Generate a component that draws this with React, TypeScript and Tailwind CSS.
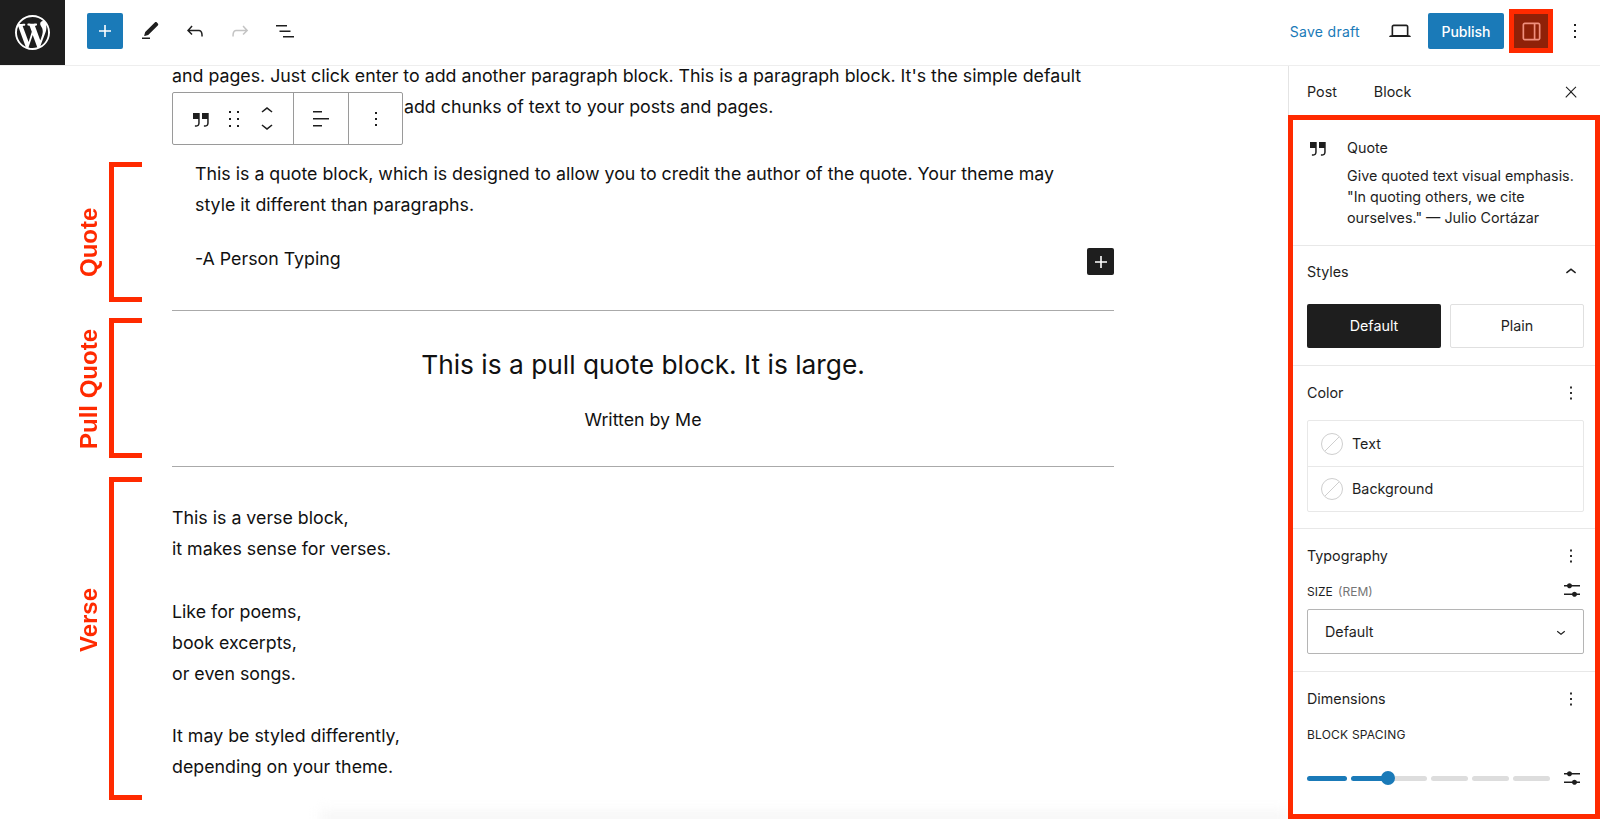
import type { ReactNode } from "react";

const P = {
  plus: "M18 11.2h-5.2V6h-1.6v5.2H6v1.6h5.2V18h1.6v-5.2H18z",
  pencil: "M4 20h8v-1.5H4V20zM18.9 3.5c-.6-.6-1.5-.6-2.1 0L7.2 13.1l-1 3.5c-.1.3.2.6.5.5l3.5-1 9.6-9.6c.6-.6.6-1.5 0-2.1l-.9-.9z",
  undo: "M18.3 11.7c-.6-.6-1.4-.9-2.3-.9H6.7l2.9-3.3-1.1-1-4.5 5L8.5 16l1-1-2.7-2.7H16c.5 0 .9.2 1.3.5 1 1 1 3.4 1 4.5v.3h1.5v-.2c0-1.5 0-4.3-1.5-5.7z",
  redo: "M15.6 6.5l-1.1 1 2.9 3.3H8c-.9 0-1.7.3-2.3.9-1.4 1.5-1.4 4.2-1.4 5.6v.2h1.5v-.3c0-1.1 0-3.5 1-4.5.3-.3.7-.5 1.3-.5h9.2L14.5 15l1.1 1.1 4.6-4.6-4.6-5z",
  list: "M3 6h11v1.5H3V6zm3.5 5.5h11V13h-11v-1.5zM21 17H10v1.5h11V17z",
  quote: "M13 6v6h5.2v4c0 .8-.2 1.4-.5 1.7-.6.6-1.6.6-2.5.5h-.3v1.5h.5c1 0 2.3-.1 3.3-1 .6-.6 1-1.6 1-2.8V6H13zm-9 6h5.2v4c0 .8-.2 1.4-.5 1.7-.6.6-1.6.6-2.5.5h-.3v1.5h.5c1 0 2.3-.1 3.3-1 .6-.6 1-1.6 1-2.8V6H4v6z",
  drag: "M7 4h2v2H7zM15 4h2v2h-2zM7 11h2v2H7zM15 11h2v2h-2zM7 18h2v2H7zM15 18h2v2h-2z",
  more: "M13 19h-2v-2h2v2zm0-6h-2v-2h2v2zm0-6h-2V5h2v2z",
  align: "M13 5.5H4V4h9v1.5Zm7 7H4V11h16v1.5Zm-7 7H4V18h9v1.5Z",
  laptop: "M20.5 16h-.7V8c0-1.1-.9-2-2-2H6.2c-1.1 0-2 .9-2 2v8h-.7c-.8 0-1.5.7-1.5 1.5h20c0-.8-.7-1.5-1.5-1.5zM5.7 8c0-.3.2-.5.5-.5h11.6c.3 0 .5.2.5.5v7.6H5.7V8z",
  sidebar: "M18 4H6c-1.1 0-2 .9-2 2v12c0 1.1.9 2 2 2h12c1.1 0 2-.9 2-2V6c0-1.1-.9-2-2-2zm-4 14.5H6c-.3 0-.5-.2-.5-.5V6c0-.3.2-.5.5-.5h8v13zm4.5-.5c0 .3-.2.5-.5.5h-2.5v-13H18c.3 0 .5.2.5.5v12z",
  close: "M13 11.8l6.1-6.3-1-1-6.1 6.2-6.1-6.2-1 1 6.1 6.3-6.5 6.7 1 1 6.5-6.6 6.5 6.6 1-1z",
  up: "M6.5 12.4L12 8l5.5 4.4-.9 1.2L12 10l-4.5 3.6-1-1.2z",
  down: "M17.5 11.6L12 16l-5.5-4.4.9-1.2L12 14l4.5-3.6 1 1.2z",
  sliders: "M14.5 13.8c-1.1 0-2.1.7-2.4 1.8H4V17h8.1c.3 1 1.3 1.8 2.4 1.8s2.1-.7 2.4-1.8H20v-1.5h-3.1c-.3-1-1.3-1.7-2.4-1.7zM11.9 7c-.3-1-1.3-1.8-2.4-1.8S7.4 6 7.1 7H4v1.5h3.1c.3 1 1.3 1.8 2.4 1.8s2.1-.7 2.4-1.8H20V7h-8.1z",
};

const WP_LOGO =
  "M20 10c0-5.51-4.49-10-10-10C4.48 0 0 4.49 0 10c0 5.52 4.48 10 10 10 5.51 0 10-4.48 10-10zM7.78 15.37L4.37 6.22c.55-.02 1.17-.08 1.17-.08.5-.06.44-1.13-.06-1.11 0 0-1.45.11-2.37.11-.18 0-.37 0-.58-.01C4.12 2.69 6.87 1.11 10 1.11c2.33 0 4.45.87 6.05 2.34-.68-.11-1.65.39-1.65 1.58 0 .74.45 1.36.9 2.1.35.61.55 1.36.55 2.46 0 1.49-1.4 5-1.4 5l-3.03-8.37c.54-.02.82-.17.82-.17.5-.05.44-1.25-.06-1.22 0 0-1.44.12-2.38.12-.87 0-2.33-.12-2.33-.12-.5-.03-.56 1.2-.06 1.22l.92.08 1.26 3.41zM17.41 10c.24-.64.74-1.87.43-4.25.7 1.29 1.05 2.71 1.05 4.25 0 3.29-1.73 6.24-4.4 7.78.97-2.59 1.94-5.2 2.92-7.78zM6.1 18.09C3.12 16.65 1.11 13.53 1.11 10c0-1.3.23-2.48.72-3.59C3.25 10.3 4.67 14.2 6.1 18.09zm4.03-6.63l2.58 6.98c-.86.29-1.76.45-2.71.45-.79 0-1.57-.11-2.29-.33.81-2.38 1.62-4.74 2.42-7.1z";

function Icon({ d, className = "w-6 h-6 fill-[#1e1e1e]" }: { d: string; className?: string }) {
  return (
    <svg viewBox="0 0 24 24" className={className}>
      <path d={d} />
    </svg>
  );
}

function Bracket({ top, height }: { top: string; height: string }) {
  return <div className={`absolute left-[109px] w-[33px] border-[5px] border-r-0 border-[#ff2a00] ${top} ${height}`} />;
}

function VLabel({ children, className }: { children: ReactNode; className: string }) {
  return (
    <div
      className={`absolute left-[75px] h-[160px] w-[28px] flex items-center justify-center [writing-mode:vertical-rl] rotate-180 text-[#ff2a00] font-bold text-[24px] leading-none font-['Liberation_Sans',sans-serif] ${className}`}
    >
      {children}
    </div>
  );
}

function PanelHead({ title, icon = P.more }: { title: string; icon?: string }) {
  return (
    <div className="flex items-center justify-between h-6 pr-[2px]">
      <span className="text-[14.3px] text-[#1e1e1e]">{title}</span>
      <Icon d={icon} className="w-[22px] h-[22px] fill-[#1e1e1e]" />
    </div>
  );
}

function ColorRow({ label, border }: { label: string; border?: boolean }) {
  return (
    <div className={`flex items-center h-[45px] pl-[12px] gap-2 text-[14.3px] text-[#1e1e1e] ${border ? "border-t border-[#e8e8e8]" : ""}`}>
      <svg viewBox="0 0 24 24" className="w-6 h-6">
        <circle cx="12" cy="12" r="10.5" fill="none" stroke="#cfcfcf" />
        <path d="M5 19 L19 5" stroke="#cfcfcf" />
      </svg>
      <span>{label}</span>
    </div>
  );
}

export default function App() {
  const segs = ["w-[40px] bg-[#1a7ab8]", "w-[36px] bg-[#1a7ab8]", "w-[36px] bg-[#dddddd]", "w-[37px] bg-[#dddddd]", "w-[37px] bg-[#dddddd]", "w-[37px] bg-[#dddddd]"];

  return (
    <div className="h-[819px] w-[1600px] overflow-hidden relative flex flex-col bg-white font-['Inter',sans-serif] text-[#1e1e1e]">
      {/* Top bar */}
      <header className="h-[66px] flex-shrink-0 flex items-center border-b border-[#eeeeee]">
        <div className="w-[65px] h-[65px] bg-[#1e1e1e] flex items-center justify-center">
          <svg viewBox="0 0 20 20" className="w-[35px] h-[35px] fill-white">
            <path d={WP_LOGO} />
          </svg>
        </div>
        <button className="ml-[22px] mb-[3px] w-9 h-9 rounded-[2px] bg-[#1a7ab8] flex items-center justify-center">
          <Icon d={P.plus} className="w-6 h-6 fill-white" />
        </button>
        <div className="ml-[15px] mb-[3px] flex items-center gap-[21px]">
          <Icon d={P.pencil} />
          <Icon d={P.undo} />
          <Icon d={P.redo} className="w-6 h-6 fill-[#c4c4c4]" />
          <Icon d={P.list} />
        </div>
        <div className="ml-auto mb-[3px] flex items-center">
          <span className="text-[14px] text-[#1a7ab8] tracking-[0.3px]">Save draft</span>
          <Icon d={P.laptop} className="ml-[27px] w-[26px] h-[26px] fill-[#1e1e1e]" />
          <button className="ml-[15px] w-[76px] h-9 rounded-[2px] bg-[#1a7ab8] text-white text-[14px] font-medium">Publish</button>
          <div className="ml-[5px] w-[44px] h-[44px] border-[5px] border-[#ff2a00] bg-[#8f2108] flex items-center justify-center">
            <Icon d={P.sidebar} className="w-[27px] h-[27px] flex-shrink-0 fill-[#f08f7d]" />
          </div>
          <Icon d={P.more} className="ml-[10px] mr-[13px] w-6 h-6 fill-[#1e1e1e]" />
        </div>
      </header>

      <div className="flex-1 flex min-h-0">
        {/* Editor canvas */}
        <main className="flex-1 relative overflow-hidden pl-[172px]">
          <div className="w-[942px] -mt-[6px] text-[17.8px] leading-[31px] text-[#111111]">
            <div className="whitespace-nowrap">and pages. Just click enter to add another paragraph block. This is a paragraph block. It's the simple default</div>
            <div className="pl-[232px] whitespace-nowrap">add chunks of text to your posts and pages.</div>

            <div className="pl-[23px] pt-[36px] pr-[40px]">
              <p>This is a quote block, which is designed to allow you to credit the author of the quote. Your theme may style it different than paragraphs.</p>
              <div className="flex items-center justify-between mt-[23px] -mr-[40px]">
                <span>-A Person Typing</span>
                <span className="w-[27px] h-[27px] mt-[3px] -mb-[3px] rounded-[2px] bg-[#1e1e1e] flex items-center justify-center">
                  <Icon d={P.plus} className="w-6 h-6 fill-white" />
                </span>
              </div>
            </div>

            <div className="mt-[36px] border-t border-[#aaaaaa] h-[156px] flex flex-col items-center pt-[37px]">
              <div className="text-[26.3px] leading-[34px]">This is a pull quote block. It is large.</div>
              <div className="mt-[25px] leading-[26px]">Written by Me</div>
            </div>

            <div className="border-t border-[#aaaaaa] pt-[35px]">
              <p>This is a verse block,</p>
              <p>it makes sense for verses.</p>
              <p className="mt-[32px]">Like for poems,</p>
              <p>book excerpts,</p>
              <p>or even songs.</p>
              <p className="mt-[31px]">It may be styled differently,</p>
              <p>depending on your theme.</p>
            </div>
          </div>

          {/* Block toolbar */}
          <div className="absolute left-[172px] top-[26px] w-[231px] h-[53px] flex bg-white border border-[#9a9a9a] rounded-[2px]">
            <div className="w-[121px] flex items-center pl-[16px] border-r border-[#9a9a9a]">
              <Icon d={P.quote} />
              <Icon d={P.drag} className="ml-[9px] w-6 h-6 fill-[#1e1e1e]" />
              <div className="ml-[9px] flex flex-col">
                <Icon d={P.up} className="w-6 h-6 -mb-[9px] fill-[#1e1e1e]" />
                <Icon d={P.down} className="w-6 h-6 fill-[#1e1e1e]" />
              </div>
            </div>
            <div className="w-[55px] flex items-center justify-center border-r border-[#9a9a9a]">
              <Icon d={P.align} />
            </div>
            <div className="flex-1 flex items-center justify-center">
              <Icon d={P.more} />
            </div>
          </div>

          {/* Annotations */}
          <VLabel className="top-[96px]">Quote</VLabel>
          <Bracket top="top-[96px]" height="h-[140px]" />
          <VLabel className="top-[243px]">Pull Quote</VLabel>
          <Bracket top="top-[252px]" height="h-[140px]" />
          <VLabel className="top-[474px]">Verse</VLabel>
          <Bracket top="top-[411px]" height="h-[323px]" />

          {/* Bottom fade of the canvas */}
          <div className="absolute left-[320px] right-0 -bottom-[6px] h-[14px] bg-[#f6f6f6] blur-[6px]" />
        </main>

        {/* Settings sidebar */}
        <aside className="w-[312px] flex-shrink-0 flex flex-col border-l border-[#e4e4e4]">
          <div className="h-[49px] flex-shrink-0 flex items-center pl-[18px] pr-[20px] pt-[3px] text-[14.3px]">
            <span>Post</span>
            <span className="ml-[37px]">Block</span>
            <Icon d={P.close} className="ml-auto w-[18px] h-[18px] fill-[#1e1e1e]" />
          </div>
          <div className="flex-1 border-[5px] border-[#ff2a00] -ml-px min-h-0">
            <section className="h-[126px] flex pl-[14px] pr-[11px] pt-[16px] border-b border-[#e8e8e8]">
              <Icon d={P.quote} className="-ml-[1px] w-6 h-6 flex-shrink-0 fill-[#1e1e1e]" />
              <div className="ml-[17px] text-[14.3px] leading-[21px] whitespace-nowrap">
                <div className="leading-[20px] mt-[2px] mb-[7px]">Quote</div>
                <p>Give quoted text visual emphasis.<br />"In quoting others, we cite<br />ourselves." — Julio Cortázar</p>
              </div>
            </section>

            <section className="h-[120px] pl-[14px] pr-[11px] pt-[14px] border-b border-[#e8e8e8]">
              <PanelHead title="Styles" icon={P.up} />
              <div className="mt-[20px] flex gap-[9px]">
                <button className="w-[134px] h-[44px] rounded-[2px] bg-[#1e1e1e] text-white text-[14.3px]">Default</button>
                <button className="w-[134px] h-[44px] rounded-[2px] border border-[#e0e0e0] text-[14.3px]">Plain</button>
              </div>
            </section>

            <section className="h-[163px] pl-[14px] pr-[11px] pt-[15px] border-b border-[#e8e8e8]">
              <PanelHead title="Color" />
              <div className="mt-[15px] border border-[#e8e8e8] rounded-[2px]">
                <ColorRow label="Text" />
                <ColorRow label="Background" border />
              </div>
            </section>

            <section className="h-[143px] pl-[14px] pr-[11px] pt-[15px] border-b border-[#e8e8e8]">
              <PanelHead title="Typography" />
              <div className="mt-[13px] h-[17px] flex items-center justify-between">
                <span className="text-[12px] mt-[4px]">SIZE <span className="ml-[2px] text-[#757575]">(REM)</span></span>
                <Icon d={P.sliders} className="w-6 h-6 fill-[#1e1e1e]" />
              </div>
              <div className="mt-[11px] h-[45px] border border-[#b5b5b5] rounded-[2px] flex items-center justify-between pl-[17px] pr-[13px] text-[14.3px]">
                <span>Default</span>
                <Icon d={P.down} className="w-[18px] h-[18px] fill-[#1e1e1e]" />
              </div>
            </section>

            <section className="pl-[14px] pr-[11px] pt-[15px]">
              <PanelHead title="Dimensions" />
              <div className="mt-[15px] text-[12px] tracking-[0.2px]">BLOCK SPACING</div>
              <div className="mt-[22px] flex items-center justify-between">
                <div className="relative flex gap-[4px]">
                  {segs.map((s, i) => (
                    <div key={i} className={`h-[5px] rounded-[3px] ${s}`} />
                  ))}
                  <div className="absolute left-[74px] -top-[5px] w-[14px] h-[14px] rounded-full bg-[#1a7ab8]" />
                </div>
                <Icon d={P.sliders} className="w-6 h-6 fill-[#1e1e1e]" />
              </div>
            </section>
          </div>
        </aside>
      </div>
    </div>
  );
}
